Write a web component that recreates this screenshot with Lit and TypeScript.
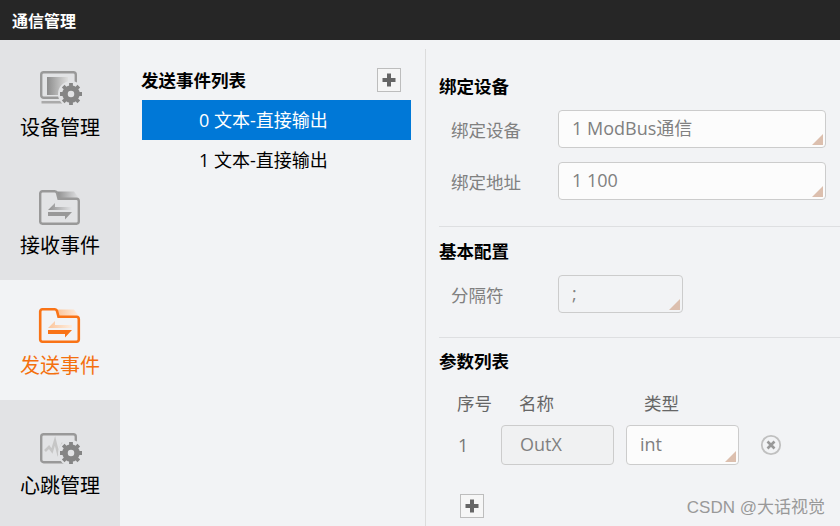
import { LitElement, html, css, svg } from "lit";
import { customElement } from "lit/decorators.js";

const gear = (x: number, y: number, bg: string) => svg`<g transform="translate(${x} ${y})">
<circle r="13" fill="${bg}"/>
<circle r="6" fill="none" stroke="#858585" stroke-width="5.500"/>
<path d="M0-11V-7M0 7V11M-11 0H-7M7 0H11M-7.800-7.800L-5-5M5 5L7.800 7.800M-7.800 7.800L-5 5M5-5L7.800-7.800" stroke="#858585" stroke-width="3.800"/></g>`;

const deviceIcon = svg`<svg class="ic" width="44" height="36" viewBox="0 0 44 36">
<defs><linearGradient id="g1" x1="0" x2="1"><stop offset="0" stop-color="#8c8c8c"/><stop offset="1" stop-color="#dedede"/></linearGradient></defs>
<rect x="3.200" y="1.200" width="34.600" height="25.600" rx="2.500" fill="none" stroke="#999" stroke-width="2.400"/>
<rect x="9" y="6" width="21" height="18" fill="url(#g1)"/>
<rect x="3.500" y="30" width="21" height="2.500" fill="#aaa"/>
${gear(33, 23, "#e2e3e5")}</svg>`;

const heartIcon = svg`<svg class="ic" width="44" height="36" viewBox="0 0 44 36">
<rect x="3.200" y="1.200" width="34.600" height="28" rx="2.500" fill="none" stroke="#999" stroke-width="2.400"/>
<path d="M7 18L11 14L14 18L17 8L20 20L24 12L27 18" fill="none" stroke="#c6c6c6" stroke-width="2.600"/>
${gear(33, 20, "#e2e3e5")}</svg>`;

const folderIcon = (c: string, soft1: string, soft2: string, id: string, w: number) => svg`<svg class="ic" width="44" height="36" viewBox="0 0 44 36">
<defs><linearGradient id="${id}" x1="0" x2="1"><stop offset="0" stop-color="${soft1}"/><stop offset="1" stop-color="${soft2}"/></linearGradient></defs>
<path d="M19 1.500H36L41 8V9.500H21z" fill="url(#${id})"/>
<path d="M4.500 1.300H16.500A2.500 2.500 0 0 1 19 3L20.500 8.800H38.500A2.500 2.500 0 0 1 40.800 11.300V31.500A2.500 2.500 0 0 1 38.500 33.800H4.500A2.500 2.500 0 0 1 2.200 31.500V3.500A2.500 2.500 0 0 1 4.500 1.300Z" fill="none" stroke="${c}" stroke-width="${w}"/>
<path d="M17 13L10 20H34V17H17z" fill="url(#${id})"/>
<path d="M10 22H34L27 29.500V26H10z" fill="${c}"/></svg>`;

@customElement("app-root")
export class AppRoot extends LitElement {
  static styles = css`
    :host { display: block; width: 840px; height: 526px; overflow: hidden; background: #f2f3f5; position: relative;
      font-family: "Open Sans", "Noto Sans CJK SC", sans-serif; color: #000; }
    * { box-sizing: border-box; }
    .bar { height: 40px; background: #262626; color: #fff; font-weight: 700; font-size: 16px; line-height: 42px; padding-left: 12px; }
    .main { display: flex; height: 486px; }
    .side { width: 120px; flex: none; background: #e2e3e5; }
    .tab { height: 120px; display: flex; flex-direction: column; align-items: center; font-size: 20px; line-height: 30px; }
    .tab .ic { display: block; height: 36px; }
    .t1 { padding-top: 31px; } .t1 .ic { margin-bottom: 6px; }
    .t2 { padding-top: 30px; } .t2 .ic { margin-bottom: 5px; }
    .t3 { padding-top: 28px; } .t3 .ic { margin-bottom: 7px; }
    .t4 { padding-top: 33px; } .t4 .ic { margin-bottom: 2px; }
    .tab.on { background: #f2f3f5; color: #f4700f; }
    .list { width: 306px; flex: none; border-right: 1px solid #dcdcdc; padding: 10px 15px 0 21px; margin-top: 9px; }
    .list-head { display: flex; align-items: center; justify-content: space-between; height: 41px; }
    .h { font-size: 17.500px; font-weight: 700; line-height: 24px; }
    .plus { width: 24px; height: 24px; border: 1px solid #bdbdbd; background: #f6f6f6; display: flex; align-items: center; justify-content: center; }
    .list-head .plus { margin-right: 9px; }
    .row { height: 40px; line-height: 40px; font-size: 18px; padding-left: 57px; width: 269px; margin-left: 1px; }
    .row.on { background: #0078d7; color: #fff; }
    .right { flex: 1; padding-left: 13px; padding-top: 34px; }
    .sec { border-bottom: 1px solid #dedfe1; }
    .s1 { height: 153px; }
    .s2 { height: 111px; padding-top: 12px; }
    .s3 { padding-top: 11px; }
    .sec-h { font-size: 17.500px; font-weight: 700; line-height: 24px; height: 24px; }
    .f { display: flex; align-items: center; padding-left: 12px; font-size: 17.500px; color: #808080; }
    .f .l { width: 107px; flex: none; }
    .s1 .f { height: 38px; }
    .s1 .f1 { margin-top: 12px; }
    .s1 .f2 { margin-top: 14px; }
    .s2 .f { height: 38px; margin-top: 12px; }
    .inp { position: relative; height: 38px; border: 1px solid #ccc; border-radius: 4px; background: #fcfcfc; color: #808080; padding-left: 13px; line-height: 34px; font-size: 18px; }
    .w268 { width: 268px; }
    .w125 { width: 125px; background: #f2f3f5; }
    .inp::after { content: ""; position: absolute; right: 2px; bottom: 2px; border-style: solid; border-width: 0 0 11px 11px; border-color: transparent transparent #dcbfae transparent; }
    .inp.plain::after { display: none; }
    .ths { display: grid; grid-template-columns: 62px 125px 113px; padding-left: 18px; font-size: 17.500px; color: #666; line-height: 24px; margin-top: 18px; }
    .tr { display: flex; align-items: center; padding-left: 19px; margin-top: 10px; font-size: 18px; color: #777; }
    .num { width: 43px; }
    .tr .inp { width: 113px; height: 40px; line-height: 36px; }
    .tr .nm { background: #f0f1f2; padding-left: 18px; }
    .tr .ty { margin-left: 12px; padding-left: 13px; }
    .x { margin-left: 21px; display: block; }
    .add { margin: 29px 0 0 21px; }
    .wm { position: absolute; right: 15px; bottom: 8px; font-size: 17px; line-height: 20px; color: #999; font-family: "Liberation Sans", "Noto Sans CJK SC", sans-serif; }
  `;

  plus() {
    return html`<div class="plus"><svg width="16" height="16" viewBox="0 0 16 16"><path d="M8 1.500V14.500M1.500 8H14.500" stroke="#666" stroke-width="4"/></svg></div>`;
  }

  render() {
    return html`
      <div class="bar">通信管理</div>
      <div class="main">
        <div class="side">
          <div class="tab t1">${deviceIcon}<span>设备管理</span></div>
          <div class="tab t2">${folderIcon("#999", "#8f8f8f", "#e2e3e5", "f1", 2.4)}<span>接收事件</span></div>
          <div class="tab t3 on">${folderIcon("#f97316", "#fbc49a", "#fdeee0", "f2", 2.6)}<span>发送事件</span></div>
          <div class="tab t4">${heartIcon}<span>心跳管理</span></div>
        </div>
        <div class="list">
          <div class="list-head"><span class="h">发送事件列表</span>${this.plus()}</div>
          <div class="row on">0 文本-直接输出</div>
          <div class="row">1 文本-直接输出</div>
        </div>
        <div class="right">
          <div class="sec s1">
            <div class="sec-h">绑定设备</div>
            <div class="f f1"><span class="l">绑定设备</span><div class="inp w268">1 ModBus通信</div></div>
            <div class="f f2"><span class="l">绑定地址</span><div class="inp w268">1 100</div></div>
          </div>
          <div class="sec s2">
            <div class="sec-h">基本配置</div>
            <div class="f"><span class="l">分隔符</span><div class="inp w125">;</div></div>
          </div>
          <div class="s3">
            <div class="sec-h">参数列表</div>
            <div class="ths"><span>序号</span><span>名称</span><span>类型</span></div>
            <div class="tr"><span class="num">1</span><div class="inp plain nm">OutX</div><div class="inp ty">int</div>
              <svg class="x" width="22" height="22" viewBox="0 0 22 22"><circle cx="11" cy="11" r="9.200" fill="none" stroke="#c0c0c0" stroke-width="1.800"/><path d="M7.500 7.500L14.500 14.500M14.500 7.500L7.500 14.500" stroke="#999" stroke-width="2.600"/></svg>
            </div>
            <div class="add">${this.plus()}</div>
          </div>
        </div>
      </div>
      <div class="wm">CSDN @大话视觉</div>
    `;
  }
}
